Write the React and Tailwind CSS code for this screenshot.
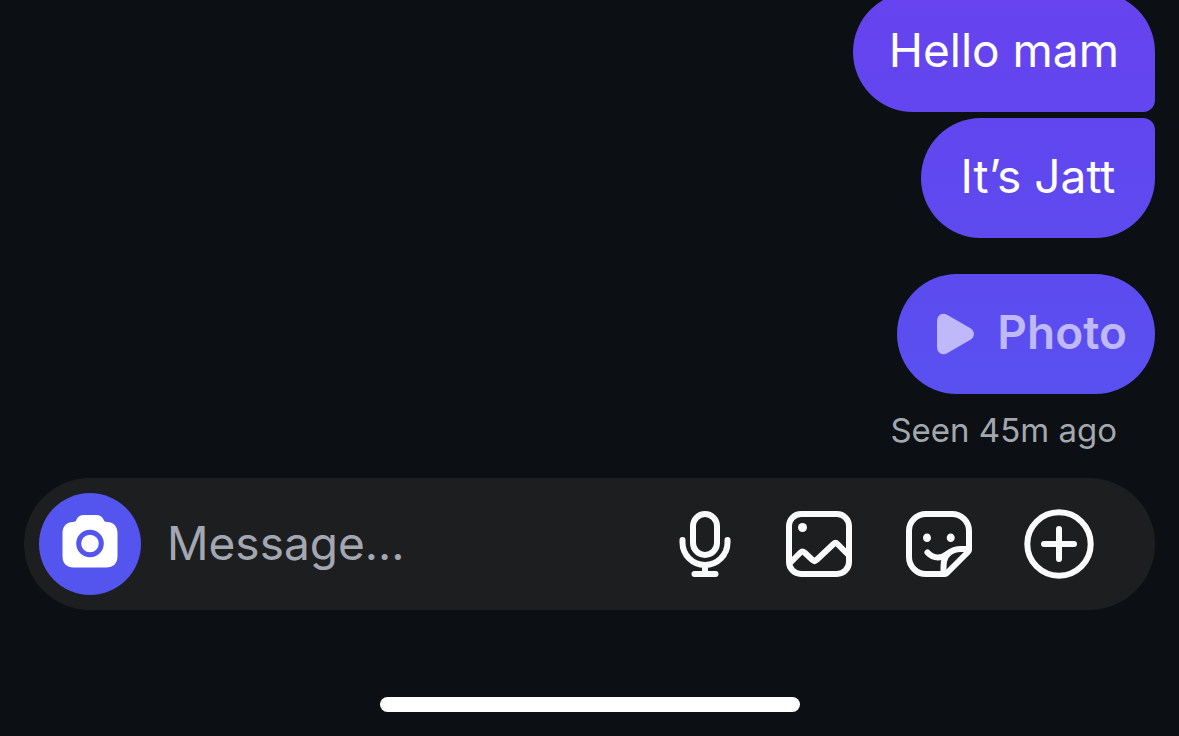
const messages = [
    { text: "Hello mam", className: "rounded-[60px] rounded-br-xl bg-linear-to-b from-[#6643ee] to-[#6246ef]" },
    { text: "It’s Jatt", className: "rounded-[60px] rounded-tr-xl bg-linear-to-b from-[#6146ef] to-[#5e4aef]" },
];

function CameraIcon() {
    return (
        <svg width="56" height="54" viewBox="0 0 56 54" fill="none" aria-hidden="true">
            <path
                fill="#fff"
                d="M22 0h12c4 0 6 1.500 7.500 4.500C42.300 6.300 43 7 45 7c6.500 0 10.500 4.500 10.500 11v23.500c0 7-4.500 11-11 11h-33C5 52.500.5 48.500.5 41.500V18C.5 11.500 4.500 7 11 7c2 0 2.700-.7 3.500-2.500C16 1.500 18 0 22 0z"
            />
            <circle cx="28" cy="28.500" r="11.300" stroke="#5454ee" strokeWidth="5" />
        </svg>
    )
}

function PlayIcon() {
    return (
        <svg width="38" height="42" viewBox="0 0 38 42" fill="currentColor" className="mt-1" aria-hidden="true">
            <path d="M0 8.500C0 2 5-1 10.500 2L33 15c5.200 3.200 5.200 8.800 0 12L10.500 40C5 43 0 40 0 33.500z" />
        </svg>
    )
}

function MicIcon() {
    return (
        <svg width="60" height="72" viewBox="0 0 60 72" fill="none" stroke="currentColor" strokeWidth="6" strokeLinecap="round" aria-hidden="true">
            <rect x="18" y="6" width="24" height="41" rx="12" />
            <path d="M7.500 32v2.500a22.500 22.500 0 0 0 45 0V32M30 57v9M19.500 66h21" />
        </svg>
    )
}

function GalleryIcon() {
    return (
        <svg width="72" height="72" viewBox="0 0 72 72" fill="none" stroke="currentColor" strokeWidth="6" strokeLinejoin="round" aria-hidden="true">
            <rect x="6" y="6" width="60" height="60" rx="12" />
            <path d="M7 55l10.500-10.500q2-2 4 0L29.500 52q2 2 4 0L50.500 36q2-2 4 0L65 46.500" />
            <circle cx="19.500" cy="19.500" r="4.500" fill="currentColor" stroke="none" />
        </svg>
    )
}

function StickerIcon() {
    return (
        <svg width="72" height="72" viewBox="0 0 72 72" fill="none" stroke="currentColor" strokeWidth="6" strokeLinecap="round" strokeLinejoin="round" aria-hidden="true">
            <path d="M42 66H23A17 17 0 0 1 6 49V23A17 17 0 0 1 23 6h26a17 17 0 0 1 17 17v19q0 1-1 2L44 65q-1 1-2 1z" />
            <path d="M24.500 44.500c3 3.300 6.500 5 10.500 5 9 0 10-8.500 23-8.500h7" />
            <path d="M40.500 65c0-9-.5-15 5.500-20" />
            <ellipse cx="24" cy="29.700" rx="4" ry="4.300" fill="currentColor" stroke="none" />
            <ellipse cx="47.700" cy="29.700" rx="4" ry="4.300" fill="currentColor" stroke="none" />
        </svg>
    )
}

function PlusIcon() {
    return (
        <svg width="72" height="72" viewBox="0 0 72 72" fill="none" stroke="currentColor" strokeWidth="6" strokeLinecap="round" aria-hidden="true">
            <circle cx="36" cy="36" r="31.700" />
            <path d="M36 21v30M21 36h30" />
        </svg>
    )
}

export default function App() {
    return (
        <div className="min-h-screen overflow-hidden bg-[#0c0f14] px-6 font-['Inter',sans-serif] text-white">
            <main className="-mt-2 flex flex-col items-end">
                <div className="flex flex-col items-end gap-1.5">
                    {messages.map((message) => (
                        <p key={message.text} className={`min-w-[234px] px-9 pt-[30px] pb-[34px] text-center text-[46px] leading-[56px] ${message.className}`}>
                            {message.text}
                        </p>
                    ))}
                </div>

                <button type="button" className="mt-9 flex items-center gap-[22px] rounded-full bg-linear-to-b from-[#5c4bef] to-[#5950f0] pt-[30px] pr-7 pb-[34px] pl-10 text-[46px] leading-[56px] font-semibold text-[#c0b9f9]">
                    <PlayIcon />
                    Photo
                </button>

                <p className="mt-4 mr-[38px] text-[33px] leading-10 text-[#a3a7ae]">Seen 45m ago</p>
            </main>

            <form className="mt-7 flex h-[132px] items-center rounded-full bg-[#1d1e20] pr-15 pl-[15px] text-[#fafafa]">
                <button type="button" aria-label="Camera" className="flex size-[102px] shrink-0 items-center justify-center rounded-full bg-[#5454ee] pb-1">
                    <CameraIcon />
                </button>
                <input
                    type="text"
                    aria-label="Message"
                    placeholder="Message..."
                    className="mb-0.5 ml-[26px] min-w-0 flex-1 bg-transparent text-[46px] leading-[56px] outline-none placeholder:text-[#a3a7b1]"
                />
                <div className="flex shrink-0 items-center gap-12">
                    <button type="button" aria-label="Record voice"><MicIcon /></button>
                    <button type="button" aria-label="Gallery"><GalleryIcon /></button>
                    <button type="button" aria-label="Stickers"><StickerIcon /></button>
                    <button type="button" aria-label="More"><PlusIcon /></button>
                </div>
            </form>

            <div className="mx-auto mt-[87px] h-[15px] w-[420px] rounded-full bg-white" />
        </div>
    )
}
